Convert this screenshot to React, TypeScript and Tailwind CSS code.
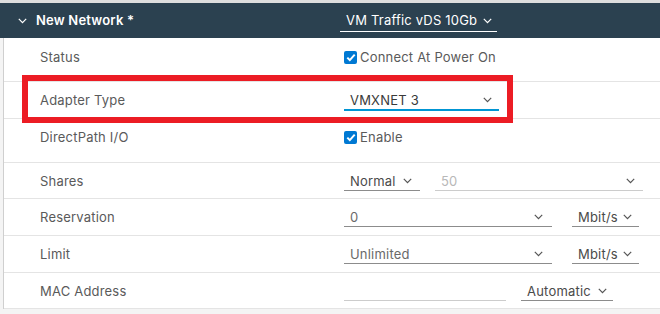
import React from "react";

const Chevron = ({ className = "" }: { className?: string }) => (
  <svg width="9" height="6" viewBox="0 0 9 6" className={className} fill="none">
    <polyline points="0.8,0.8 4.5,4.6 8.2,0.8" stroke="currentColor" strokeWidth="1.2" />
  </svg>
);

const Check = () => (
  <span className="inline-flex items-center justify-center w-[13px] h-[13px] rounded-[2px] bg-[#0079d3] mr-[3px]">
    <svg width="10" height="9" viewBox="0 0 10 9" fill="none">
      <polyline points="1.3,4.6 3.8,7.1 8.7,1.6" stroke="white" strokeWidth="2" />
    </svg>
  </span>
);

const Select = ({
  text,
  w,
  chevronClass = "",
  textClass = "text-[#4a4a4a]",
  borderClass = "border-b border-[#8c8c8c]",
  h = "h-[20px]",
}: {
  text: string;
  w: string;
  chevronClass?: string;
  textClass?: string;
  borderClass?: string;
  h?: string;
}) => (
  <div className={`${w} ${h} ${borderClass} flex items-center justify-between pl-[6px]`}>
    <span className={textClass}>{text}</span>
    <Chevron className={`text-[#555] ${chevronClass}`} />
  </div>
);

const Row = ({
  label,
  h,
  pt = "pt-[8px]",
  children,
}: {
  label: string;
  h: string;
  pt?: string;
  children?: React.ReactNode;
}) => (
  <div className={`flex ${h} ${pt} border-b border-[#e4e4e4]`}>
    <div className="w-[340px] pl-[36px] leading-[20px] text-[#5a5a5a]">{label}</div>
    <div className="flex items-start leading-[20px]">{children}</div>
  </div>
);

export default function App() {
  return (
    <div
      className="relative w-[660px] h-[314px] bg-[#f4f4f4] overflow-hidden text-[13px] tracking-[0.2px]"
      style={{ fontFamily: "Inter, 'Noto Sans', sans-serif" }}
    >
      <div className="h-[3px] bg-[#dedede]" />
      <div className="h-[35px] bg-[#2b4150] flex items-center text-white">
        <div className="w-[340px] flex items-center pl-[18px]">
          <Chevron className="text-white mr-[9px]" />
          <span className="font-semibold">New Network *</span>
        </div>
        <div className="w-[157px] h-[22px] border-b border-white flex items-center pl-[6px] mt-[1px]">
          <span>VM Traffic vDS 10Gb</span>
          <Chevron className="text-white ml-[6px]" />
        </div>
      </div>
      <div className="ml-[3px] border-l border-[#cfcfcf] bg-white">
        <Row label="Status" h="h-[44px]" pt="pt-[9px]">
          <div className="flex items-center h-[20px] text-[#5a5a5a]">
            <Check />
            <span>Connect At Power On</span>
          </div>
        </Row>
        <Row label="Adapter Type" h="h-[37px]">
          <Select
            text="VMXNET 3"
            w="w-[155px]"
            h="h-[21px]"
            borderClass="border-b-2 border-[#0095d3]"
            textClass="text-[#3a3a3a]"
            chevronClass="mr-[7px]"
          />
        </Row>
        <Row label="DirectPath I/O" h="h-[44px]">
          <div className="flex items-center h-[20px] text-[#5a5a5a]">
            <Check />
            <span>Enable</span>
          </div>
        </Row>
        <Row label="Shares" h="h-[36px]">
          <Select text="Normal" w="w-[76px]" chevronClass="mr-[8px]" />
          <div className="ml-[15px]">
            <Select
              text="50"
              w="w-[208px]"
              textClass="text-[#b8b8b8]"
              borderClass="border-b border-[#cccccc]"
              chevronClass="mr-[8px]"
            />
          </div>
        </Row>
        <Row label="Reservation" h="h-[37px]">
          <Select text="0" w="w-[208px]" textClass="text-[#6a6a6a]" chevronClass="mr-[9px]" />
          <div className="ml-[20px]">
            <Select text="Mbit/s" w="w-[67px]" chevronClass="mr-[7px]" />
          </div>
        </Row>
        <Row label="Limit" h="h-[37px]">
          <Select text="Unlimited" w="w-[208px]" textClass="text-[#6a6a6a]" chevronClass="mr-[9px]" />
          <div className="ml-[20px]">
            <Select text="Mbit/s" w="w-[67px]" chevronClass="mr-[7px]" />
          </div>
        </Row>
        <Row label="MAC Address" h="h-[36px]">
          <div className="w-[162px] h-[20px] border-b border-[#cccccc]" />
          <div className="ml-[15px]">
            <Select text="Automatic" w="w-[92px]" chevronClass="mr-[6px]" />
          </div>
        </Row>
      </div>
      <div className="absolute left-[22px] top-[75px] w-[491px] h-[48px] border-[6px] border-[#ec1c24] pointer-events-none" />
    </div>
  );
}
